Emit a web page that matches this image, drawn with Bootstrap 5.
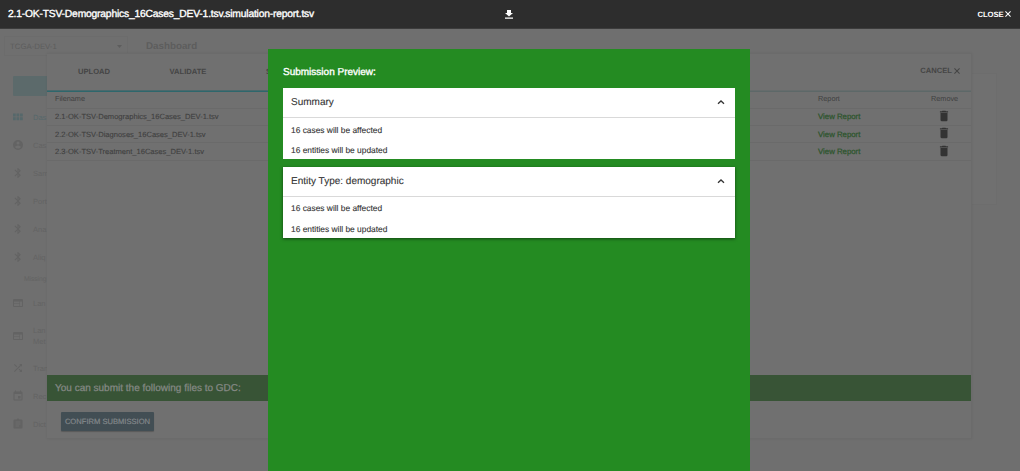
<!DOCTYPE html>
<html lang="en">
<head>
<meta charset="utf-8">
<meta name="viewport" content="width=device-width, initial-scale=1">
<title>Submission Preview</title>
<link rel="stylesheet" href="https://cdn.jsdelivr.net/npm/bootstrap@5.3.0/dist/css/bootstrap.min.css">
<style>
  body { font-family: "Liberation Sans", Arial, sans-serif; font-size: 7.5px; line-height: 1.2; text-rendering: geometricPrecision; background: #6f6f6f; color: #404040; height: 471px; overflow: hidden; }
  svg { display: block; fill: currentColor; flex: none; }
  .topbar { height: 29px; background: #2d2d2d; color: #fff; border-bottom: 1px solid #3c3c3c; padding: 0 9px 0 8px; z-index: 3; }
  .topbar .file-title { font-size: 10.3px; letter-spacing: -.19px; line-height: 16px; display: block; padding-top: 1px; -webkit-text-stroke: .35px #fff; }
  .topbar .download { margin-right: 2px; }
  .topbar .close-link { font-size: 7.7px; font-weight: 700; gap: 1.5px; letter-spacing: -.1px; padding-top: 1px; }
  .page { height: 442px; color: #636363; }
  .page-head { height: 31px; padding: 7px 0 0 4px; }
  .project-select { width: 124px; height: 20px; border: 1px solid #6c6c6c; padding: 1px 5px 0; font-size: 7.8px; color: #5d5d5d; }
  .page-title { font-size: 9.8px; font-weight: 700; margin: 3px 0 0 18px; height: 16px; line-height: 16px; color: #5d5d5d; }
  .sidebar { width: 47px; padding-top: 16px; overflow: hidden; }
  .side-btn { width: 105px; height: 20px; margin: 0 0 7px 13px; background: #5c6a6b; border-radius: 1px; }
  .side-item { height: 28px; padding-left: 12px; }
  .side-item.active { color: #56686b; }
  .side-item.tall { height: 37px; line-height: 11px; }
  .side-item svg { width: 12px; height: 12px; margin-right: 9px; }
  .side-label { height: 18px; line-height: 18px; padding-left: 24px; font-size: 6.8px; letter-spacing: -.1px; }
  .back-panel { height: 132px; margin: 13px 23px 0 0; background: #707070; border: 1px solid #6d6d6d; }
  .upload-dialog { top: 53px; left: 47px; width: 925px; height: 386px; background: #707070; border: 1px solid #6b6b6b; border-left-width: 0; box-shadow: 0 0 3px rgba(0,0,0,.06); z-index: 1; }
  .steps { height: 37.5px; font-size: 7.6px; font-weight: 700; color: #454545; box-shadow: inset 0 -1.5px #5d6868; }
  .steps .step { width: 94px; padding-top: 13px; text-align: center; }
  .steps .step-line { width: 330px; box-shadow: inset 0 -1.5px #2e676c; }
  .steps .step:last-child { text-align: left; padding-left: 31px; }
  .cancel-link { padding: 11px 11px 0 0; gap: 2px; height: 22px; }
  .files { font-size: 7.55px; }
  .files .file-row { height: 17.3px; border-bottom: 1px solid #6a6a6a; padding-left: 8px; -webkit-text-stroke: .12px; }
  .files .file-row:first-child { font-size: 7.3px; -webkit-text-stroke: 0; }
  .files .name-cell { width: 763px; }
  .files .report-cell { width: 113px; }
  .files .view { color: #2d552d; font-size: 7.8px; -webkit-text-stroke: .25px; }
  .files svg { width: 14px; height: 14px; margin-left: 6px; color: #333; position: relative; top: -1px; }
  .notice { height: 26px; background: #385436; color: #858985; font-size: 10px; padding: 1px 0 0 8px; -webkit-text-stroke: .25px; }
  .actions { height: 37px; }
  .confirm { width: 93px; height: 19px; margin: 11px 0 0 14px; background: #424e54; color: #83888b; font-size: 7.6px; border-radius: 1px; box-shadow: 0 1px 1px rgba(0,0,0,.2); -webkit-text-stroke: .2px; }
  .preview { top: 48.6px; left: 268px; width: 482px; height: 423px; background: #248b22; padding: 0 15px; z-index: 2; }
  .preview-title { height: 39.8px; padding-top: 18px; font-size: 10px; color: #fff; -webkit-text-stroke: .35px #fff; }
  .panel-box { background: #fff; height: 71px; color: #333; font-size: 8.4px; margin-bottom: 7.7px; -webkit-text-stroke: .1px; }
  .panel-box:last-child { box-shadow: 0 1px 3px rgba(0,0,0,.5); }
  .panel-top { height: 30px; border-bottom: 1px solid #d9d9d9; padding: 0 8px; font-size: 10px; }
  .panel-top span { padding-top: 1px; }
  .panel-top svg { margin-top: -2px; }
  .panel-line { height: 20.5px; padding: 2px 8px 0; }
  .t { white-space: nowrap; }
</style>
</head>
<body class="position-relative">
<svg width="0" height="0" class="position-absolute" aria-hidden="true">
  <symbol id="grid" viewBox="0 0 24 24"><path d="M2 5h5.500v6H2zm7 0h5.500v6H9zm7 0h5.500v6H16zM2 12.500h5.500v6H2zm7 0h5.500v6H9zm7 0h5.500v6H16z"/></symbol>
  <symbol id="person" viewBox="0 0 24 24"><path d="M12 2a10 10 0 1 0 0 20 10 10 0 0 0 0-20zm0 3a3 3 0 1 1 0 6 3 3 0 0 1 0-6zm0 14.200a7.200 7.200 0 0 1-6-3.220c.03-1.990 4-3.080 6-3.080s5.970 1.090 6 3.080a7.200 7.200 0 0 1-6 3.220z"/></symbol>
  <symbol id="sample" viewBox="0 0 24 24"><path d="M17.700 7.700L12 2h-1v7.600L6.400 5 5 6.400l5.600 5.600L5 17.600 6.400 19l4.600-4.600V22h1l5.700-5.700-4.300-4.300zM13 5.800l1.900 1.900L13 9.600zm1.900 10.500L13 18.200v-3.800z"/></symbol>
  <symbol id="web" viewBox="0 0 24 24"><path d="M20 4H4a2 2 0 0 0-2 2v12a2 2 0 0 0 2 2h16a2 2 0 0 0 2-2V6a2 2 0 0 0-2-2zm-5 14H4v-4h11zm0-5H4V9h11zm5 5h-4V9h4z"/></symbol>
  <symbol id="shuffle" viewBox="0 0 24 24"><path d="M10.600 9.200L5.400 4 4 5.400l5.200 5.200zM14.500 4l2 2L4 18.600 5.400 20 18 7.500l2 2V4zm.3 9.400l-1.400 1.400 3.100 3.100-2 2.100H20v-5.500l-2 2z"/></symbol>
  <symbol id="event" viewBox="0 0 24 24"><path d="M17 12h-5v5h5zM16 1v2H8V1H6v2H5a2 2 0 0 0-2 2v14c0 1.100.9 2 2 2h14a2 2 0 0 0 2-2V5a2 2 0 0 0-2-2h-1V1zm3 18H5V8h14z"/></symbol>
  <symbol id="clip" viewBox="0 0 24 24"><path fill-rule="evenodd" d="M19 3h-4.200a3 3 0 0 0-5.600 0H5a2 2 0 0 0-2 2v14c0 1.100.9 2 2 2h14a2 2 0 0 0 2-2V5a2 2 0 0 0-2-2zM14 17H7v-2h7zm3-4H7v-2h10zm0-4H7V7h10z"/></symbol>
  <symbol id="trash" viewBox="0 0 24 24"><path d="M6 19c0 1.100.9 2 2 2h8a2 2 0 0 0 2-2V7H6zM19 4h-3.500l-1-1h-5l-1 1H5v2h14z"/></symbol>
  <symbol id="cross" viewBox="0 0 14 14"><path d="M1 1l12 12M13 1L1 13" fill="none" stroke="currentColor" stroke-width="2.400"/></symbol>
  <symbol id="chevron" viewBox="0 0 12 8"><path d="M3 5.800L6 3l3 2.800" fill="none" stroke="currentColor" stroke-width="1.300"/></symbol>
</svg>

<header class="topbar d-flex align-items-center justify-content-between position-relative">
  <div class="col"><span class="file-title t">2.1-OK-TSV-Demographics_16Cases_DEV-1.tsv.simulation-report.tsv</span></div>
  <svg class="download" width="12" height="12" viewBox="0 0 24 24"><path d="M20 10h-4V4H8v6H4l8 7zM4 19v2.500h16V19z"/></svg>
  <div class="col d-flex justify-content-end align-items-center close-link"><span class="t">CLOSE</span><svg width="6" height="6"><use href="#cross"/></svg></div>
</header>

<div class="page">
  <div class="page-head d-flex">
    <div class="project-select d-flex align-items-center justify-content-between"><span>TCGA-DEV-1</span><svg width="5" height="3" viewBox="0 0 10 6"><path d="M0 0h10L5 6z"/></svg></div>
    <div class="page-title">Dashboard</div>
  </div>
  <div class="d-flex">
    <nav class="sidebar">
      <div class="side-btn"></div>
      <div class="side-item active d-flex align-items-center"><svg><use href="#grid"/></svg>Das</div>
      <div class="side-item d-flex align-items-center"><svg><use href="#person"/></svg>Cas</div>
      <div class="side-item d-flex align-items-center"><svg><use href="#sample"/></svg>Sam</div>
      <div class="side-item d-flex align-items-center"><svg><use href="#sample"/></svg>Port</div>
      <div class="side-item d-flex align-items-center"><svg><use href="#sample"/></svg>Ana</div>
      <div class="side-item d-flex align-items-center"><svg><use href="#sample"/></svg>Aliq</div>
      <div class="side-label">Missing</div>
      <div class="side-item d-flex align-items-center"><svg><use href="#web"/></svg>Lan</div>
      <div class="side-item tall d-flex align-items-center"><svg><use href="#web"/></svg><span>Lan<br>Met</span></div>
      <div class="side-item d-flex align-items-center"><svg><use href="#shuffle"/></svg>Tran</div>
      <div class="side-item d-flex align-items-center"><svg><use href="#event"/></svg>Rec</div>
      <div class="side-item d-flex align-items-center"><svg><use href="#clip"/></svg>Dict</div>
    </nav>
    <div class="flex-grow-1"><div class="back-panel"></div></div>
  </div>
</div>

<section class="upload-dialog position-absolute d-flex flex-column">
  <div class="steps d-flex justify-content-between">
    <div class="step-line d-flex"><div class="step t">UPLOAD</div><div class="step t">VALIDATE</div><div class="step t">S</div></div>
    <div class="cancel-link d-flex align-items-center"><span>CANCEL</span><svg width="6" height="6"><use href="#cross"/></svg></div>
  </div>
  <div class="files flex-grow-1">
    <div class="file-row d-flex align-items-center"><span class="name-cell">Filename</span><span class="report-cell">Report</span><span>Remove</span></div>
    <div class="file-row d-flex align-items-center"><span class="name-cell">2.1-OK-TSV-Demographics_16Cases_DEV-1.tsv</span><span class="report-cell view">View Report</span><svg><use href="#trash"/></svg></div>
    <div class="file-row d-flex align-items-center"><span class="name-cell">2.2-OK-TSV-Diagnoses_16Cases_DEV-1.tsv</span><span class="report-cell view">View Report</span><svg><use href="#trash"/></svg></div>
    <div class="file-row d-flex align-items-center"><span class="name-cell">2.3-OK-TSV-Treatment_16Cases_DEV-1.tsv</span><span class="report-cell view">View Report</span><svg><use href="#trash"/></svg></div>
  </div>
  <div class="notice d-flex align-items-center"><span class="t">You can submit the following files to GDC:</span></div>
  <div class="actions"><div class="confirm d-flex align-items-center justify-content-center t">CONFIRM SUBMISSION</div></div>
</section>

<section class="preview position-absolute">
  <div class="preview-title">Submission Preview:</div>
  <div class="panel-box">
    <div class="panel-top d-flex align-items-center justify-content-between"><span>Summary</span><svg width="12" height="8"><use href="#chevron"/></svg></div>
    <div class="panel-line d-flex align-items-center">16 cases will be affected</div>
    <div class="panel-line d-flex align-items-center">16 entities will be updated</div>
  </div>
  <div class="panel-box">
    <div class="panel-top d-flex align-items-center justify-content-between"><span>Entity Type: demographic</span><svg width="12" height="8"><use href="#chevron"/></svg></div>
    <div class="panel-line d-flex align-items-center">16 cases will be affected</div>
    <div class="panel-line d-flex align-items-center">16 entities will be updated</div>
  </div>
</section>
<script src="https://cdn.jsdelivr.net/npm/bootstrap@5.3.0/dist/js/bootstrap.bundle.min.js"></script>
</body>
</html>
